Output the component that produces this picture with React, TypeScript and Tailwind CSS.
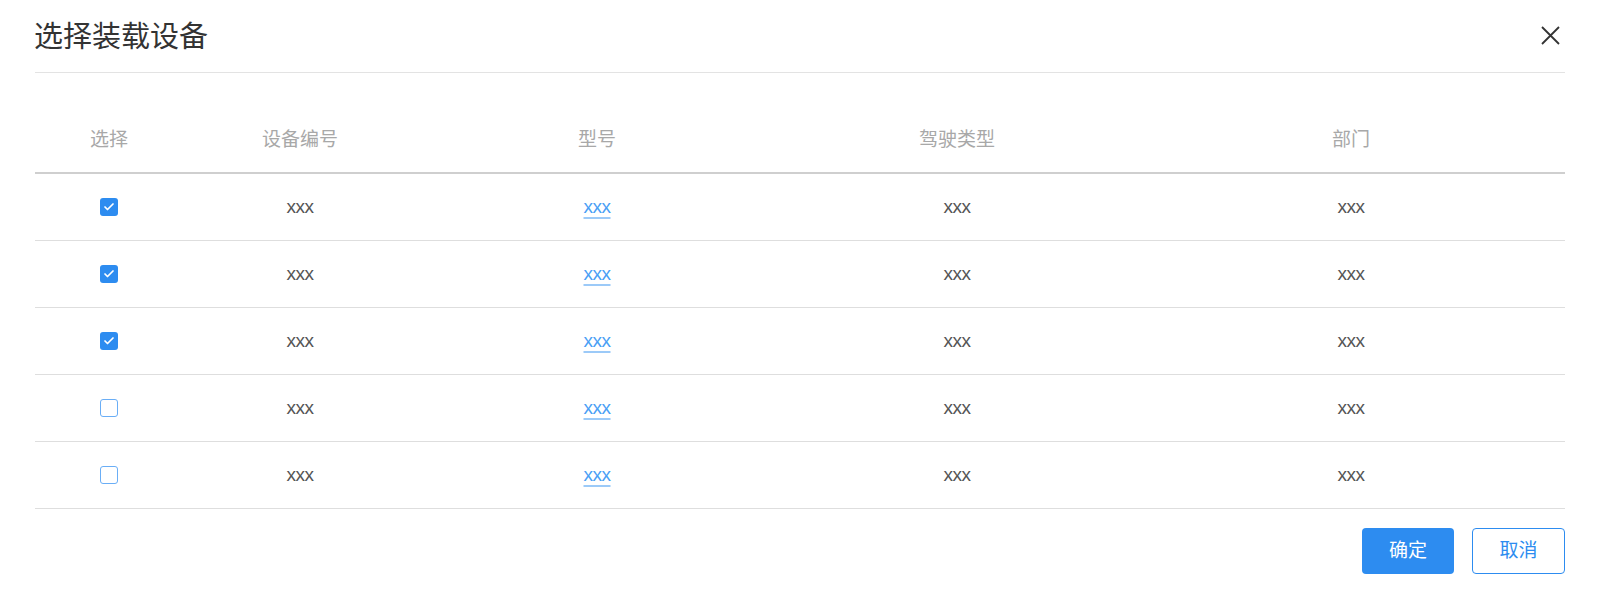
import { Check } from "lucide-react";

const rows = [true, true, true, false, false];

const cols = ["w-[148px]", "w-[234px]", "w-[360px]", "w-[360px]", "flex-1"];

export default function App() {
  return (
    <div className="w-[1600px] h-[608px] bg-white font-['Liberation_Sans','Noto_Sans_CJK_SC',sans-serif]">
      <div className="mx-[35px]">
        <div className="h-[73px] flex items-center justify-between border-b border-[#e3e3e3]">
          <h1 className="text-[29px] text-[#333] -ml-px pt-[3px]">选择装载设备</h1>
          <button className="text-[#333] mr-[5px] -mt-[2px]">
            <svg width="19" height="19" viewBox="0 0 19 19" fill="none" stroke="currentColor" strokeWidth="1.8">
              <path d="M1 1L18 18M18 1L1 18" />
            </svg>
          </button>
        </div>

        <div className="mt-[36px]">
          <div className="flex h-[65px] items-center border-b-[2px] border-[#cfcfcf] text-[19px] text-[#a8a8a8]">
            <div className={`${cols[0]} text-center`}>选择</div>
            <div className={`${cols[1]} text-center`}>设备编号</div>
            <div className={`${cols[2]} text-center`}>型号</div>
            <div className={`${cols[3]} text-center`}>驾驶类型</div>
            <div className={`${cols[4]} text-center`}>部门</div>
          </div>
          {rows.map((checked, i) => (
            <div
              key={i}
              className="flex h-[67px] items-center border-b border-[#dedede] text-[19px] text-[#555] tracking-[-0.5px]"
            >
              <div className={`${cols[0]} flex justify-center`}>
                {checked ? (
                  <span className="w-[18px] h-[18px] rounded-[3px] bg-[#2d8cf0] flex items-center justify-center">
                    <Check className="w-[12px] h-[12px] text-white" strokeWidth={3.5} />
                  </span>
                ) : (
                  <span className="w-[18px] h-[18px] rounded-[3px] border-[1.5px] border-[#6aaef6] bg-white" />
                )}
              </div>
              <div className={`${cols[1]} text-center`}>xxx</div>
              <div className={`${cols[2]} text-center`}>
                <a className="text-[#4a9ff5] underline underline-offset-[4px] decoration-[#9ccaf8] decoration-[1.5px]">xxx</a>
              </div>
              <div className={`${cols[3]} text-center`}>xxx</div>
              <div className={`${cols[4]} text-center`}>xxx</div>
            </div>
          ))}
        </div>

        <div className="flex justify-end gap-[18px] mt-[19px]">
          <button className="w-[92px] h-[46px] rounded-[4px] bg-[#2d8cf0] text-white text-[19px]">确定</button>
          <button className="w-[93px] h-[46px] rounded-[4px] border border-[#2d8cf0] bg-white text-[#2d8cf0] text-[19px]">取消</button>
        </div>
      </div>
    </div>
  );
}
